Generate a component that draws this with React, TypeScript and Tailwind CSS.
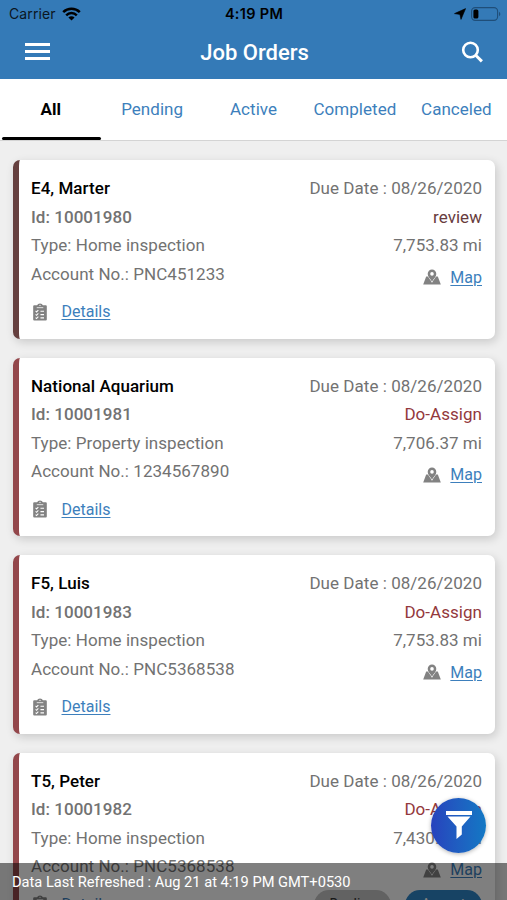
import { useState } from "react";
import clsx from "clsx";

const TABS = ["All", "Pending", "Active", "Completed", "Canceled"];

const JOBS = [
  { id: "10001980", name: "E4, Marter", type: "Home inspection", account: "PNC451233", due: "08/26/2020", status: "review", distance: "7,753.83 mi" },
  { id: "10001981", name: "National Aquarium", type: "Property inspection", account: "1234567890", due: "08/26/2020", status: "Do-Assign", distance: "7,706.37 mi" },
  { id: "10001983", name: "F5, Luis", type: "Home inspection", account: "PNC5368538", due: "08/26/2020", status: "Do-Assign", distance: "7,753.83 mi" },
  { id: "10001982", name: "T5, Peter", type: "Home inspection", account: "PNC5368538", due: "08/26/2020", status: "Do-Assign", distance: "7,430.12 mi", actions: true },
];

type Job = (typeof JOBS)[number];

function StatusBar() {
  return (
    <div className="grid h-[27px] grid-cols-3 items-center pl-[9px] pr-[6px] font-['Inter',sans-serif] text-[14px] text-[#0b1622]">
      <div className="flex items-center gap-[6px]">
        <span className="tracking-[0.1px]">Carrier</span>
        <svg width="19" height="14" viewBox="0 0 19 14" fill="none" stroke="#000" strokeWidth="2.5">
          <path d="M1.2 5.1a11.8 11.8 0 0 1 16.6 0" />
          <path d="M4.2 8.3a7.5 7.5 0 0 1 10.6 0" />
          <path d="M9.5 13.6 6.4 10.5a4.4 4.4 0 0 1 6.2 0z" fill="#000" stroke="none" />
        </svg>
      </div>
      <span className="pr-[2px] text-center text-[14.5px] font-semibold tracking-[0.3px] whitespace-nowrap text-black">4:19 PM</span>
      <div className="flex items-center justify-end gap-[5px]">
        <svg width="12" height="12" viewBox="0 0 12 12">
          <path d="M11.6.6 7 11.4 5.9 6.4.5 5.6z" fill="#000" stroke="#000" strokeWidth=".6" strokeLinejoin="round" />
        </svg>
        <svg width="30" height="14" viewBox="0 0 30 14">
          <rect x="0.6" y="0.6" width="26" height="12.8" rx="3.6" fill="none" stroke="#1f4e79" strokeWidth="1.1" />
          <rect x="2.4" y="2.4" width="5" height="9.2" rx="1.6" fill="#000" />
          <path d="M28 4.8c1.8.8 1.8 3.6 0 4.4z" fill="#1f4e79" />
        </svg>
      </div>
    </div>
  );
}

function MapIcon() {
  return (
    <svg width="18" height="16" viewBox="0 0 18 16" fill="#828282">
      <path d="M3.2 7.6h11.6l3 8H.2z" />
      <path
        d="M9 .6a4.3 4.3 0 0 1 4.3 4.3C13.3 7.5 10.7 9.6 9 12.6 7.3 9.6 4.7 7.5 4.7 4.9A4.3 4.3 0 0 1 9 .6z"
        stroke="#fff"
        strokeWidth="1.2"
        paintOrder="stroke"
      />
      <circle cx="9" cy="4.9" r="1.8" fill="#fff" />
    </svg>
  );
}

function ClipboardIcon() {
  return (
    <svg width="14" height="18" viewBox="0 0 15 19">
      <path d="M1.3 2.2h3.1a3.2 2.4 0 0 1 6.2 0h3.1q1.1 0 1.1 1.1v14.2q0 1.1-1.1 1.1H1.3q-1.1 0-1.1-1.1V3.3q0-1.1 1.1-1.1z" fill="#828282" />
      <path d="M4 4.8h7" stroke="#d6d6d6" strokeWidth="1.2" />
      <circle cx="7.5" cy="2.3" r=".7" fill="#fff" />
      <path d="m2.8 8.4 1 1 1.9-2M2.8 12l1 1 1.9-2M2.8 15.5l1 1 1.9-2M8 8.7h3.8M8 12.3h3.8M8 15.8h3.8" fill="none" stroke="#fff" strokeWidth="1.1" />
    </svg>
  );
}

function JobCard({ job }: { job: Job }) {
  const review = job.status === "review";
  return (
    <div
      className={clsx(
        "flex h-[178.5px] shrink-0 justify-between rounded-[7px] border-l-[6px] bg-white pt-[14px] pr-[13px] pl-[12px] text-[17px] leading-[28.6px] tracking-[0.04px] text-[#727272] shadow-[2px_3px_10px_rgba(0,0,0,0.16)]",
        review ? "border-[#65403f]" : "border-[#93474b]"
      )}
    >
      <div>
        <h2 className="font-medium text-black">{job.name}</h2>
        <p className="font-medium">Id: {job.id}</p>
        <p>Type: {job.type}</p>
        <p>Account No.: {job.account}</p>
        <div className="mt-[8px] flex items-center gap-[14.5px] pl-[2px]">
          <ClipboardIcon />
          <a href="#" className="pt-[2px] text-[16px] tracking-normal text-[#3d7fbc] underline underline-offset-2">Details</a>
        </div>
      </div>
      <div className="flex flex-col items-end">
        <p>Due Date : {job.due}</p>
        <p className={review ? "text-[#683c3e]" : "text-[#93383c]"}>{job.status}</p>
        <p>{job.distance}</p>
        <div className="mt-[2px] flex items-center gap-[9px]">
          <MapIcon />
          <a href="#" className="pt-[2px] text-[16px] tracking-normal text-[#3d7fbc] underline underline-offset-2">Map</a>
        </div>
        {job.actions && (
          <div className="mt-[5px] flex gap-[14px] text-center text-[14px] leading-[29px]">
            <button className="h-[30px] w-[77px] rounded-full bg-[#c4c4c4] text-[#333]">Decline</button>
            <button className="h-[30px] w-[77px] rounded-full bg-[#2f86c8] text-white">Accept</button>
          </div>
        )}
      </div>
    </div>
  );
}

export default function App() {
  const [tab, setTab] = useState("All");

  return (
    <div className="relative flex h-[900px] w-[507px] flex-col overflow-hidden bg-[#efefef] font-['Roboto',sans-serif]">
      <header className="h-[79px] shrink-0 bg-[#347ab7]">
        <StatusBar />
        <div className="flex h-[49px] items-center justify-between pr-[24px] pl-[25px]">
          <button className="flex w-[25px] flex-col gap-[4px]">
            <span className="h-[3px] bg-white" />
            <span className="h-[3px] bg-white" />
            <span className="h-[3px] bg-white" />
          </button>
          <h1 className="pt-[2px] pr-[2px] text-[22px] font-medium text-white">Job Orders</h1>
          <button>
            <svg width="22" height="22" viewBox="0 0 22 22" fill="none" stroke="#fff" strokeWidth="2.6">
              <circle cx="9.5" cy="9" r="7.3" />
              <path d="m14.7 14.2 6.2 6.2" strokeWidth="3" />
            </svg>
          </button>
        </div>
      </header>

      <nav className="flex h-[62px] shrink-0 border-b border-[#d4d4d4] bg-white">
        {TABS.map((t) => (
          <button
            key={t}
            onClick={() => setTab(t)}
            className={clsx(
              "flex flex-1 flex-col items-center px-px pt-[18px] text-[17px] tracking-[0.03px]",
              t === tab ? "font-bold text-black" : "text-[#3d7fbc]"
            )}
          >
            <span>{t}</span>
            {t === tab && <span className="mt-auto ml-px h-[3px] w-full rounded-full bg-black" />}
          </button>
        ))}
      </nav>

      <main className="flex flex-1 flex-col gap-[19px] overflow-hidden pt-[19px] pr-[12px] pl-[13px]">
        {JOBS.map((job) => (
          <JobCard key={job.id} job={job} />
        ))}
      </main>

      <button className="absolute top-[798px] left-[431px] flex h-[55px] w-[55px] justify-center rounded-full bg-linear-to-r from-[#2742bd] to-[#1278c4] pt-[13px] shadow-[0_1px_4px_rgba(0,0,0,0.3)]">
        <svg width="26" height="28" viewBox="0 0 26 28" fill="#fff">
          <path d="M0 0h26v4H0zM1.5 5.5h23L15.8 15.5v8L10.5 28V15.5z" />
        </svg>
      </button>

      <footer className="absolute inset-x-0 bottom-0 h-[37px] bg-black/50 pl-[12px] text-[14.65px] leading-[38px] text-white">
        Data Last Refreshed : Aug 21 at 4:19 PM GMT+0530
      </footer>
    </div>
  );
}
